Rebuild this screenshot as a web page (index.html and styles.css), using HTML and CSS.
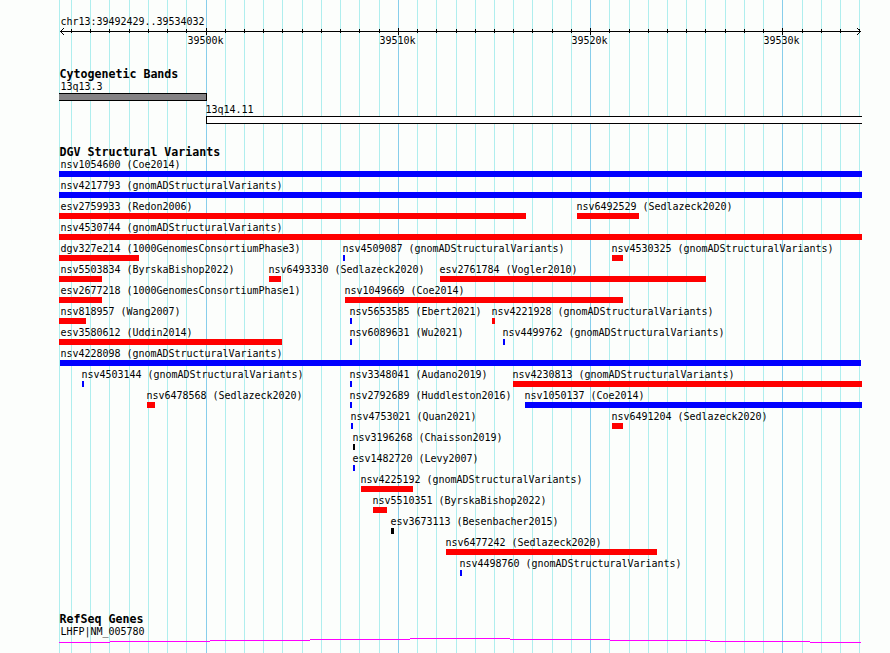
FILE: index.html
```
<!DOCTYPE html>
<html>
<head>
    <meta charset="utf-8">
    <title>chr13:39492429..39534032</title>
    <link rel="stylesheet" href="styles.css">
</head>
<body>
    <div class="panel">
        <svg class="grid" id="grid" width="803" height="653" shape-rendering="crispEdges"></svg>

        <div class="ruler">
            <div class="label">chr13:39492429..39534032</div>
            <svg class="axis" id="axis" width="803" height="7" shape-rendering="crispEdges">
                <path class="line" d="M1 3.5H802" />
                <path class="line" d="M1 3h1v1h-1zM2 2h1v1h-1zM3 1h1v1h-1zM4 0h1v1h-1zM2 4h1v1h-1zM3 5h1v1h-1zM4 6h1v1h-1z" />
                <path class="line" d="M801 3h1v1h-1zM800 2h1v1h-1zM799 1h1v1h-1zM798 0h1v1h-1zM800 4h1v1h-1zM799 5h1v1h-1zM798 6h1v1h-1z" />
            </svg>
            <div class="row numbers" id="numbers"></div>
        </div>

        <div class="track bands">
            <h2>Cytogenetic Bands</h2>
            <div class="label first">13q13.3</div>
            <div class="band gray"></div>
            <div class="open-band">
                <div class="label">13q14.11</div>
                <div class="band"></div>
            </div>
        </div>

        <div class="track variants">
            <h2>DGV Structural Variants</h2>
            <div id="variants"></div>
        </div>

        <div class="track genes">
            <h2>RefSeq Genes</h2>
            <div class="label first">LHFP|NM_005780</div>
            <svg class="gene" width="803" height="5" shape-rendering="crispEdges">
                <path d="M0 4.5H51M51 3.5H151M151 2.5H251M251 1.5H351M351 .5H451M451 1.5H551M551 2.5H651M651 3.5H751M751 4.5H802" />
            </svg>
        </div>
    </div>

    <script>
        // [name, start, end, color], in panel pixels
        const rows = [
            [['nsv1054600 (Coe2014)', 0, 803, 'blue']],
            [['nsv4217793 (gnomADStructuralVariants)', 0, 803, 'blue']],
            [['esv2759933 (Redon2006)', 0, 467, 'red'], ['nsv6492529 (Sedlazeck2020)', 518, 580, 'red']],
            [['nsv4530744 (gnomADStructuralVariants)', 0, 803, 'red']],
            [['dgv327e214 (1000GenomesConsortiumPhase3)', 0, 80, 'red'], ['nsv4509087 (gnomADStructuralVariants)', 284, 286, 'blue'], ['nsv4530325 (gnomADStructuralVariants)', 553, 564, 'red']],
            [['nsv5503834 (ByrskaBishop2022)', 0, 43, 'red'], ['nsv6493330 (Sedlazeck2020)', 210, 222, 'red'], ['esv2761784 (Vogler2010)', 381, 647, 'red']],
            [['esv2677218 (1000GenomesConsortiumPhase1)', 0, 43, 'red'], ['nsv1049669 (Coe2014)', 286, 564, 'red']],
            [['nsv818957 (Wang2007)', 0, 27, 'red'], ['nsv5653585 (Ebert2021)', 291, 293, 'blue'], ['nsv4221928 (gnomADStructuralVariants)', 433, 436, 'red']],
            [['esv3580612 (Uddin2014)', 0, 223, 'red'], ['nsv6089631 (Wu2021)', 291, 293, 'blue'], ['nsv4499762 (gnomADStructuralVariants)', 444, 446, 'blue']],
            [['nsv4228098 (gnomADStructuralVariants)', 1, 802, 'blue']],
            [['nsv4503144 (gnomADStructuralVariants)', 23, 25, 'blue'], ['nsv3348041 (Audano2019)', 291, 293, 'blue'], ['nsv4230813 (gnomADStructuralVariants)', 454, 803, 'red']],
            [['nsv6478568 (Sedlazeck2020)', 88, 96, 'red'], ['nsv2792689 (Huddleston2016)', 291, 293, 'blue'], ['nsv1050137 (Coe2014)', 466, 803, 'blue']],
            [['nsv4753021 (Quan2021)', 292, 294, 'blue'], ['nsv6491204 (Sedlazeck2020)', 553, 564, 'red']],
            [['nsv3196268 (Chaisson2019)', 294, 296, 'black']],
            [['esv1482720 (Levy2007)', 294, 296, 'blue']],
            [['nsv4225192 (gnomADStructuralVariants)', 302, 354, 'red']],
            [['nsv5510351 (ByrskaBishop2022)', 314, 328, 'red']],
            [['esv3673113 (Besenbacher2015)', 332, 335, 'black']],
            [['nsv6477242 (Sedlazeck2020)', 387, 598, 'red']],
            [['nsv4498760 (gnomADStructuralVariants)', 401, 403, 'blue']]
        ];

        const variants = document.getElementById('variants');
        rows.forEach(function(features) {
            const row = document.createElement('div');
            row.className = 'row';
            features.forEach(function([name, start, end, color]) {
                const feature = document.createElement('div');
                feature.className = 'feature';
                feature.style.marginLeft = start + 'px';
                const label = document.createElement('div');
                label.className = 'label';
                if (start === 0) label.classList.add('first');
                if (start === 1) label.classList.add('second');
                label.textContent = name;
                const bar = document.createElement('div');
                bar.className = 'bar ' + color;
                bar.style.width = (end - start) + 'px';
                feature.append(label, bar);
                row.append(feature);
            });
            variants.append(row);
        });

        // one line per 1 kb, a darker one every 10 kb
        function addRect(svg, x, y, height, cls) {
            const rect = document.createElementNS('http://www.w3.org/2000/svg', 'rect');
            rect.setAttribute('x', x);
            rect.setAttribute('y', y);
            rect.setAttribute('width', 1);
            rect.setAttribute('height', height);
            rect.setAttribute('class', cls);
            svg.append(rect);
        }

        const grid = document.getElementById('grid');
        const axis = document.getElementById('axis');
        const numbers = document.getElementById('numbers');
        addRect(grid, 0, 0, 653, 'minor');
        for (let kb = 39493; kb <= 39534; kb++) {
            const x = Math.floor(147.01 + (kb - 39500) * 19.23);
            const major = kb % 10 === 0;
            addRect(grid, x, 0, 653, major ? 'major' : 'minor');
            if (x > 800) continue;
            addRect(axis, x, major ? 0 : 1, major ? 7 : 4, 'tick');
            if (major) {
                const number = document.createElement('div');
                number.className = 'label';
                number.style.marginLeft = (x - 19) + 'px';
                number.textContent = kb + 'k';
                numbers.append(number);
            }
        }
    </script>
</body>
</html>
```
FILE: styles.css
```
body {
    margin: 0;
    height: 653px;
    overflow: hidden;
    background-color: #fcfefc;
    color: #000;
    font-family: "DejaVu Sans Mono", monospace;
    font-size: 10px;
}
.panel {
    position: relative;
    width: 803px;
    height: 653px;
    margin-left: 59px;
}
.grid {
    position: absolute;
    top: 0;
    left: 0;
    z-index: -1;
}
.minor {
    fill: #afeeee;
}
.major {
    fill: #87ceeb;
}
svg {
    display: block;
}
h2 {
    margin: 0;
    font-size: 11.63px;
    line-height: 14px;
    font-weight: bold;
    text-indent: 0.4px;
}
.label {
    height: 12px;
    line-height: 12px;
    letter-spacing: -0.02px;
    text-indent: 0.5px;
    white-space: nowrap;
}
.first {
    padding-left: 1px;
}
.row {
    display: grid;
}
.row > * {
    grid-area: 1 / 1;
}

/* ruler */
.ruler {
    height: 51px;
    padding-top: 16px;
}
.ruler > .label {
    padding-left: 1px;
}
.line {
    fill: #000;
}
.line:first-child {
    stroke: #000;
}
.numbers {
    height: 12px;
}

/* bands */
.bands {
    height: 78px;
}
.band {
    box-sizing: border-box;
    height: 8px;
    border: 1px solid #000;
    background-color: #fff;
}
.gray {
    width: 148px;
    margin-bottom: 3px;
    border-left: none;
    background-color: #848284;
}
.open-band {
    margin-left: 147px;
}
.open-band .band {
    border-right: none;
}
.open-band .label {
    margin-left: -1px;
}

/* variants */
.variants {
    height: 467px;
}
.feature {
    height: 21px;
}
.feature .label {
    margin-left: -1px;
}
.feature .first,
.feature .second {
    margin-left: 0;
}
.bar {
    height: 6px;
}
.blue {
    background-color: #00f;
}
.red {
    background-color: #f00;
}
.black {
    background-color: #000;
}

/* genes */
.gene {
    fill: none;
    stroke: #f0f;
}
```
